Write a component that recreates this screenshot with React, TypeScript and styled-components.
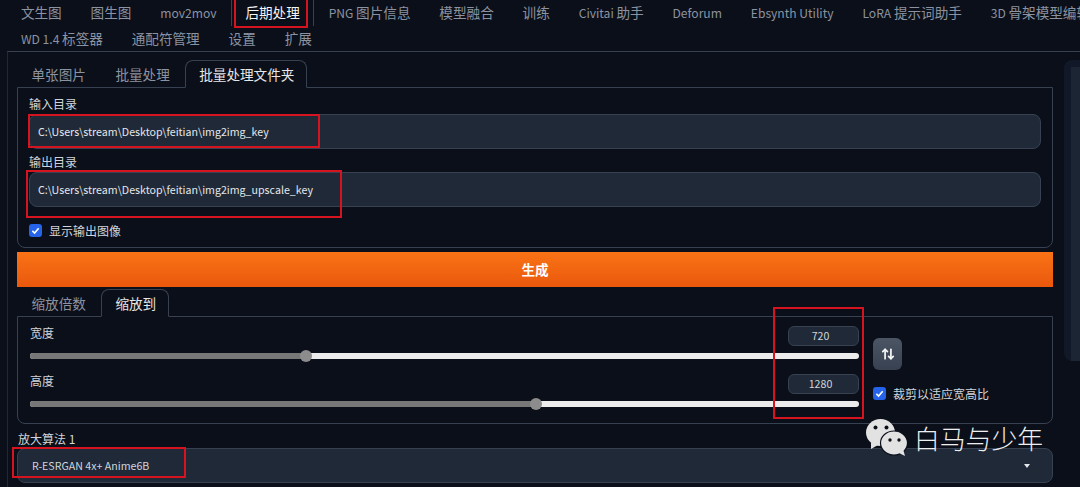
import * as React from 'react';
import styled, { createGlobalStyle } from 'styled-components';
import { ArrowUpDown } from 'lucide-react';

const GlobalStyle = createGlobalStyle`
  html, body {
    margin: 0;
    padding: 0;
    background: #0b0f19;
    overflow: hidden;
  }
  * { box-sizing: border-box; }
`;

const Page = styled.div`
  position: relative;
  width: 1080px;
  height: 487px;
  overflow: hidden;
  background: #0b0f19;
  font-family: "Noto Sans CJK SC", "Noto Sans", sans-serif;
  font-size: 13.6px;
  color: #d1d5db;
`;

const NavRow = styled.div`
  display: flex;
  flex-wrap: nowrap;
  height: 26px;
  padding-left: 6.5px;
  white-space: nowrap;

  & + & { height: 25px; }
`;

const NavTab = styled.div<{ $active?: boolean }>`
  display: flex;
  align-items: center;
  padding: 0 13.45px 2px;
  border: 1px solid transparent;
  border-top: 0;
  border-bottom: 0;
  color: ${p => (p.$active ? '#f3f4f6' : '#8b93a1')};
  ${p => p.$active && 'border-color: #374151;'}
`;

/* latin runs in the reference are narrower than the CJK face's own latin */
const Latin = styled.span`
  font-size: 0.89em;
  white-space: pre;
`;

const Body = styled.div`
  display: flex;
  margin-left: 7px;
  border-top: 1px solid #374151;
  border-left: 1px solid #1f2937;
  height: 436px;
`;

const Main = styled.div`
  width: 1036px;
  margin-left: 9px;
  flex: none;
  padding-top: 8px;
`;

const SideColumn = styled.div`
  width: 20px;
  height: 301px;
  margin: 8px 0 0 11px;
  padding: 7px 0 0 7px;
  border-radius: 8px 0 0 8px;
  background: #111827;
  flex: none;
`;

const SideThumb = styled.div`
  height: 100%;
  background: #1c2533;
`;

const SubTabs = styled.div`
  display: flex;
  height: 28px;
  margin-bottom: -1px;
`;

const SubTab = styled.div<{ $active?: boolean }>`
  display: flex;
  align-items: center;
  padding: 0 ${p => (p.$active ? 12 : 14)}px 0 13.5px;
  border: 1px solid ${p => (p.$active ? '#374151' : 'transparent')};
  border-bottom-color: ${p => (p.$active ? '#0b0f19' : 'transparent')};
  border-radius: 8px 8px 0 0;
  color: ${p => (p.$active ? '#e5e7eb' : '#8b93a1')};
  position: relative;
`;

const Panel = styled.div<{ $height: number }>`
  height: ${p => p.$height}px;
  border: 1px solid #374151;
  border-radius: 0 0 8px 8px;
`;

const FolderPanel = styled(Panel)`
  padding: 7px 11px 0;
`;

const FieldLabel = styled.div`
  height: 19px;
  line-height: 17px;
  font-size: 12px;
  color: #d1d5db;
`;

const PathInput = styled.div`
  display: flex;
  align-items: center;
  height: 35px;
  margin-bottom: 4px;
  padding: 0 0 1px 8px;
  background: #1f2937;
  border: 1px solid #374151;
  border-radius: 8px;
  font-size: 10.65px;
  color: #e5e7eb;
`;

const CheckRow = styled.label<{ $top?: number }>`
  display: flex;
  align-items: center;
  gap: 7px;
  height: 14px;
  margin-top: ${p => p.$top ?? 0}px;
  font-size: 12px;
  color: #d1d5db;
`;

const CheckBox = styled.span`
  display: flex;
  align-items: center;
  justify-content: center;
  width: 13px;
  height: 13px;
  flex: none;
  border-radius: 3px;
  background: #2563eb;
`;

const GenerateButton = styled.div`
  display: flex;
  align-items: center;
  justify-content: center;
  height: 35px;
  margin-top: 4px;
  padding-bottom: 2px;
  background: linear-gradient(to bottom, #f97316, #ea580c);
  color: #fff;
  font-weight: 700;
  font-size: 13.6px;
`;

const ScaleTabs = styled(SubTabs)`
  margin-top: 2px;
`;

const ResizePanel = styled(Panel)`
  display: flex;
  padding: 9px 0 0 12px;
`;

const SliderColumn = styled.div`
  width: 830px;
  flex: none;
`;

const SliderBlock = styled.div`
  margin-bottom: 15px;
`;

const SliderHead = styled.div`
  display: flex;
  align-items: flex-start;
  justify-content: space-between;
  height: 20px;
  margin-bottom: 7px;
  font-size: 12px;
  line-height: 14px;
`;

const NumberBox = styled.div`
  display: flex;
  align-items: center;
  justify-content: center;
  width: 71px;
  height: 20px;
  margin-right: 1px;
  padding-right: 6px;
  background: #1f2937;
  border: 1px solid #374151;
  border-radius: 6px;
  font-size: 10.65px;
  color: #d1d5db;
`;

const Track = styled.div`
  position: relative;
  height: 6px;
  width: 829px;
  border-radius: 3px;
  background: #ececec;
`;

const TrackFill = styled.div`
  height: 100%;
  border-radius: 3px 0 0 3px;
  background: #777;
`;

const Thumb = styled.div`
  position: absolute;
  top: -3px;
  width: 12px;
  height: 12px;
  margin-left: -6px;
  border-radius: 50%;
  background: #8c8c8c;
`;

const SideControls = styled.div`
  padding: 12px 0 0 13px;
`;

const SwapButton = styled.div`
  display: flex;
  align-items: center;
  justify-content: center;
  width: 29px;
  height: 32px;
  border-radius: 6px;
  background: linear-gradient(to bottom, #4b5563, #374151);
  color: #f3f4f6;
`;

const SelectLabel = styled.div`
  height: 17px;
  margin: 6px 0 1px 1px;
  line-height: 17px;
  font-size: 12px;
  color: #d1d5db;
`;

const SelectBox = styled.div`
  display: flex;
  align-items: center;
  justify-content: space-between;
  height: 35px;
  padding: 0 22px 0 14px;
  background: #1f2937;
  border: 1px solid #374151;
  border-radius: 8px;
  font-size: 10.65px;
  color: #d1d5db;
`;

const Caret = styled.span`
  width: 0;
  height: 0;
  border-left: 3.5px solid transparent;
  border-right: 3.5px solid transparent;
  border-top: 4px solid #e5e7eb;
`;

/* red annotation rectangles sit on top of the screenshot */
const Mark = styled.div<{ $x: number; $y: number; $w: number; $h: number }>`
  position: absolute;
  left: ${p => p.$x}px;
  top: ${p => p.$y}px;
  width: ${p => p.$w}px;
  height: ${p => p.$h}px;
  border: 2px solid #d5141f;
  pointer-events: none;
`;

const Watermark = styled.div`
  position: absolute;
  left: 866px;
  top: 419px;
  display: flex;
  align-items: center;
  gap: 7px;
  color: #eeeeee;
  font-size: 25.8px;
  line-height: 36px;
  font-weight: 300;
`;

const Tick = () => (
  <svg width="9" height="9" viewBox="0 0 10 10">
    <path d="M1.5 5.4 L4 7.8 L8.5 2.4" fill="none" stroke="#fff" strokeWidth="1.8" />
  </svg>
);

const WeChatLogo = () => (
  <svg width="41" height="37" viewBox="0 0 41 37">
    <ellipse cx="14.5" cy="13.5" rx="14.5" ry="13.5" fill="#e2e2e2" />
    <polygon points="5,23 5,30 12,26" fill="#e2e2e2" />
    <circle cx="9.5" cy="8.5" r="2" fill="#0b0f19" />
    <circle cx="20.5" cy="8.5" r="2" fill="#0b0f19" />
    <ellipse cx="28" cy="24" rx="13.5" ry="12" fill="#e2e2e2" stroke="#0b0f19" strokeWidth="1.2" />
    <polygon points="33,34 39,37 37,30" fill="#e2e2e2" />
    <circle cx="24" cy="21" r="1.700" fill="#0b0f19" />
    <circle cx="33" cy="21" r="1.700" fill="#0b0f19" />
  </svg>
);

const firstRow = ['文生图', '图生图', 'mov2mov', '后期处理', 'PNG 图片信息', '模型融合', '训练', 'Civitai 助手', 'Deforum', 'Ebsynth Utility', 'LoRA 提示词助手', '3D 骨架模型编辑'];
const secondRow = ['WD 1.4 标签器', '通配符管理', '设置', '扩展'];

const TabLabel = ({ text }: { text: string }) => (
  <span>
    {text.split(/([\x20-\x7e]+)/).map((run, i) =>
      i % 2 ? <Latin key={i}>{run}</Latin> : run
    )}
  </span>
);

const SliderRow = ({ label, value, percent }: { label: string; value: string; percent: number }) => (
  <SliderBlock>
    <SliderHead>
      <span>{label}</span>
      <NumberBox>{value}</NumberBox>
    </SliderHead>
    <Track>
      <TrackFill style={{ width: `${percent}%` }} />
      <Thumb style={{ left: `${percent}%` }} />
    </Track>
  </SliderBlock>
);

export default function App() {
  return (
    <Page>
      <GlobalStyle />
      <NavRow>
        {firstRow.map(t => (
          <NavTab key={t} $active={t === '后期处理'}><TabLabel text={t} /></NavTab>
        ))}
      </NavRow>
      <NavRow>
        {secondRow.map(t => (
          <NavTab key={t}><TabLabel text={t} /></NavTab>
        ))}
      </NavRow>
      <Body>
        <Main>
          <SubTabs>
            <SubTab>单张图片</SubTab>
            <SubTab>批量处理</SubTab>
            <SubTab $active>批量处理文件夹</SubTab>
          </SubTabs>
          <FolderPanel $height={161}>
            <FieldLabel>输入目录</FieldLabel>
            <PathInput>C:\Users\stream\Desktop\feitian\img2img_key</PathInput>
            <FieldLabel>输出目录</FieldLabel>
            <PathInput>C:\Users\stream\Desktop\feitian\img2img_upscale_key</PathInput>
            <CheckRow $top={16}>
              <CheckBox><Tick /></CheckBox>
              显示输出图像
            </CheckRow>
          </FolderPanel>
          <GenerateButton>生成</GenerateButton>
          <ScaleTabs>
            <SubTab>缩放倍数</SubTab>
            <SubTab $active>缩放到</SubTab>
          </ScaleTabs>
          <ResizePanel $height={108}>
            <SliderColumn>
              <SliderRow label="宽度" value="720" percent={33.3} />
              <SliderRow label="高度" value="1280" percent={61} />
            </SliderColumn>
            <SideControls>
              <SwapButton><ArrowUpDown size={14} strokeWidth={3} /></SwapButton>
              <CheckRow $top={16}>
                <CheckBox><Tick /></CheckBox>
                裁剪以适应宽高比
              </CheckRow>
            </SideControls>
          </ResizePanel>
          <SelectLabel>放大算法 1</SelectLabel>
          <SelectBox>
            R-ESRGAN 4x+ Anime6B
            <Caret />
          </SelectBox>
        </Main>
        <SideColumn><SideThumb /></SideColumn>
      </Body>
      <Mark $x={234} $y={-2} $w={74} $h={30} />
      <Mark $x={28} $y={114} $w={292} $h={34} />
      <Mark $x={26} $y={170} $w={316} $h={48} />
      <Mark $x={773} $y={307} $w={91} $h={112} />
      <Mark $x={12} $y={447} $w={174} $h={31} />
      <Watermark>
        <WeChatLogo />
        白马与少年
      </Watermark>
    </Page>
  );
}
